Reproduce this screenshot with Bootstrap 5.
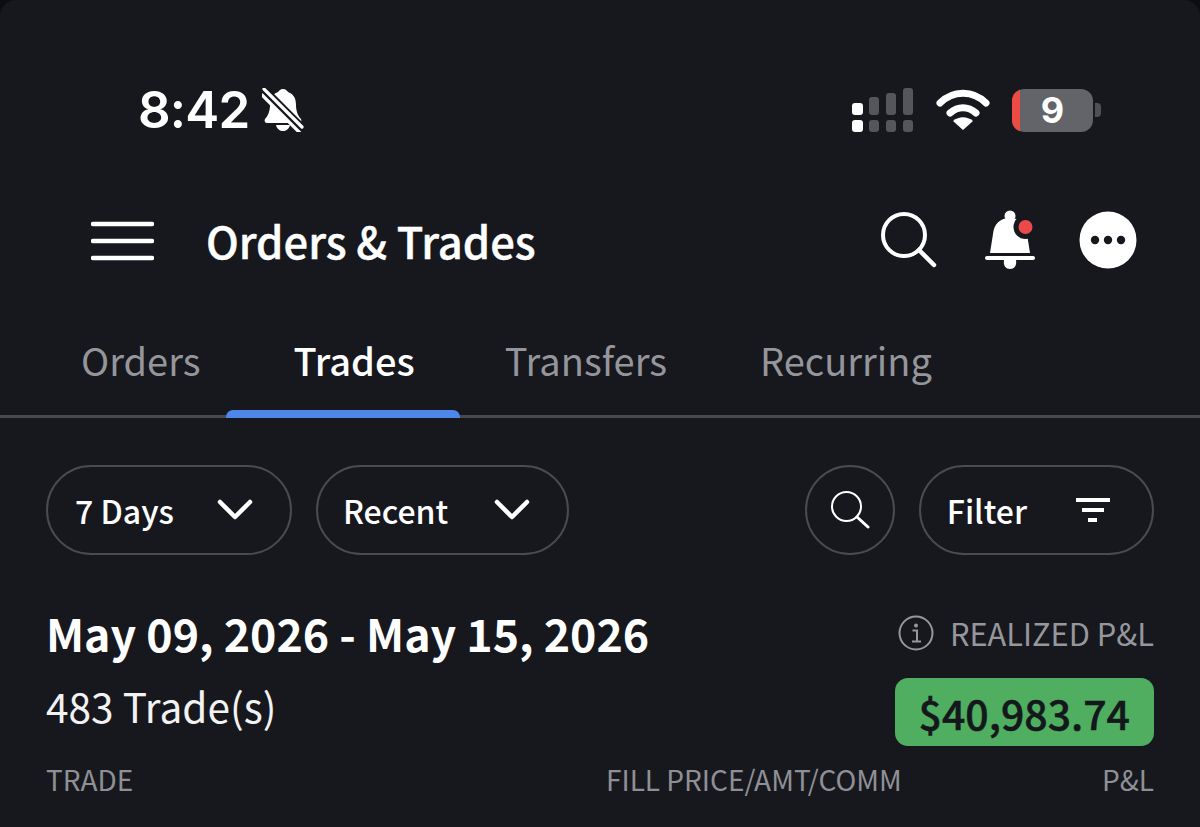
<!DOCTYPE html>
<html lang="en">
<head>
  <meta charset="UTF-8" />
  <meta name="viewport" content="width=device-width, initial-scale=1.0" />
  <title>Orders &amp; Trades</title>
  <link href="https://cdn.jsdelivr.net/npm/bootstrap@5.3.0/dist/css/bootstrap.min.css" rel="stylesheet">
  <style>
    html, body {
      height: 100%;
      background-color: #0c0d10;
    }
    body {
      font-family: "Noto Sans CJK SC", "Noto Sans", sans-serif;
      color: #fff;
      overflow: hidden;
    }
    .app-screen {
      height: 827px;
      background-color: #17181e;
      border-top-left-radius: 16px;
      border-top-right-radius: 16px;
      overflow: hidden;
    }
    .status-row {
      height: 179px;
      padding: 80px 99px 0 138px;
    }
    .status-inner {
      height: 60px;
    }
    .clock {
      font-family: Inter, "Liberation Sans", sans-serif;
      font-size: 51px;
      font-weight: 600;
      line-height: 60px;
      letter-spacing: -.8px;
    }
    .mute-bell {
      margin-left: 13px;
    }
    .wifi-icon {
      margin: 0 22px;
    }
    .batt {
      width: 81px;
      height: 43px;
      background-color: #63646a;
      border-radius: 12px;
      font-family: Inter, "Liberation Sans", sans-serif;
      font-size: 36px;
      font-weight: 700;
      line-height: 43px;
      text-align: center;
      overflow: hidden;
      position: relative;
    }
    .batt-low {
      position: absolute;
      left: 0;
      top: 0;
      width: 8px;
      height: 100%;
      background-color: #ec4a43;
    }
    .batt-cap {
      width: 6px;
      height: 14px;
      margin-left: 2px;
      background-color: #4f5056;
      border-radius: 0 4px 4px 0;
    }
    .head-row {
      height: 124px;
      padding: 0 63px 0 91px;
    }
    .head-title {
      font-size: 43.5px;
      font-weight: 500;
      margin-left: 52px;
      line-height: 1;
      -webkit-text-stroke: .4px #fff;
    }
    .head-icons {
      margin-top: -3px;
    }
    .bell-icon {
      margin-left: 45px;
    }
    .more-icon {
      margin-left: 42px;
    }
    .tab-row {
      height: 115px;
      padding-left: 81px;
      border-bottom: 3px solid #48494e;
    }
    .tab-item {
      height: 112px;
      font-size: 38px;
      line-height: 114px;
      color: #95969b;
      position: relative;
      margin-right: 93px;
    }
    .tab-item.is-on {
      color: #fff;
      font-weight: 500;
      margin-right: 90px;
    }
    .tab-item.is-on::after {
      content: "";
      position: absolute;
      left: -68px;
      right: -45px;
      bottom: -3px;
      height: 8px;
      background-color: #4f86ea;
      border-radius: 7px 7px 0 0;
    }
    .tool-row {
      padding: 47px 46px 0;
    }
    .pill-btn {
      height: 90px;
      border: 2px solid #4a4b50;
      border-radius: 45px;
      font-size: 32px;
      font-weight: 500;
      color: #fff;
      background: transparent;
      padding: 0 36px 0 27px;
    }
    .pill-gap {
      margin-left: 24px;
    }
    .pill-recent {
      padding-left: 25px;
    }
    .pill-round {
      width: 90px;
      padding: 0;
      justify-content: center;
    }
    .pill-filter {
      padding: 0 41px 0 26px;
    }
    .chev-icon {
      margin-left: 42px;
    }
    .pill-recent .chev-icon {
      margin-left: 45px;
    }
    .filter-icon {
      margin-left: 48px;
    }
    .sum-row {
      padding: 0 46px;
      margin-top: 48px;
    }
    .range-text {
      font-size: 44.7px;
      font-weight: 700;
      line-height: 60px;
    }
    .count-text {
      font-size: 40.6px;
      line-height: 50px;
      margin-top: 18px;
      color: #f2f2f3;
    }
    .realized {
      font-size: 30.8px;
      line-height: 44px;
      color: #96979c;
      margin-top: 8px;
    }
    .pnl-box {
      background-color: #4fae5f;
      color: #14181c;
      border-radius: 13px;
      font-size: 41px;
      font-weight: 500;
      line-height: 68px;
      padding: 0 24px;
      margin-top: 23px;
      -webkit-text-stroke: .5px #14181c;
    }
    .col-labels {
      padding: 0 46px;
      font-size: 28px;
      line-height: 40px;
      color: #8f9095;
      margin-top: 13px;
    }
    .col-first {
      width: 560px;
    }
  </style>
</head>
<body>
  <div class="app-screen">

    <div class="status-row">
      <div class="status-inner d-flex align-items-center justify-content-between">
        <div class="d-flex align-items-center">
          <span class="clock">8:42</span>
          <svg class="mute-bell" width="42" height="44" viewBox="0 0 42 44">
            <path d="M21 1c3 0 4 2 5 3 6 2 8 7 8 13 0 6 2 11 5 14 1 2 0 4-2 4H5c-2 0-3-2-2-4 3-3 5-8 5-14 0-6 2-11 8-13 1-1 2-3 5-3z" fill="#fff"/>
            <path d="M14 37h14c-1 4-4 6-7 6s-6-2-7-6z" fill="#fff"/>
            <path d="M2 3l38 38" stroke="#17181e" stroke-width="10"/>
            <path d="M2 1l38 38M0 7l38 38" stroke="#fff" stroke-width="3.2" stroke-linecap="round"/>
          </svg>
        </div>
        <div class="d-flex align-items-center">
          <svg width="62" height="45" viewBox="0 0 62 45">
            <rect x="0" y="15" width="11" height="12" rx="3" fill="#fff"/>
            <rect x="0" y="32" width="11" height="12" rx="3" fill="#fff"/>
            <rect x="17" y="9" width="10" height="18" rx="3" fill="#55565b"/>
            <rect x="17" y="32" width="10" height="12" rx="3" fill="#55565b"/>
            <rect x="34" y="5" width="10" height="22" rx="3" fill="#55565b"/>
            <rect x="34" y="32" width="10" height="12" rx="3" fill="#55565b"/>
            <rect x="51" y="0" width="10" height="27" rx="3" fill="#55565b"/>
            <rect x="51" y="32" width="10" height="12" rx="3" fill="#55565b"/>
          </svg>
          <svg class="wifi-icon" width="54" height="42" viewBox="0 0 54 42">
            <path d="M4 14C17 1 37 1 50 14" fill="none" stroke="#fff" stroke-width="7" stroke-linecap="round"/>
            <path d="M14 24c8-7 18-7 26 0" fill="none" stroke="#fff" stroke-width="7" stroke-linecap="round"/>
            <path d="M17 32c6-5 14-5 20 0l-10 9z" fill="#fff"/>
          </svg>
          <div class="batt"><span class="batt-low"></span>9</div>
          <span class="batt-cap"></span>
        </div>
      </div>
    </div>

    <div class="head-row d-flex align-items-center">
      <svg width="63" height="40" viewBox="0 0 63 40">
        <path d="M2 3h59M2 20h59M2 37h59" stroke="#fff" stroke-width="4.500" stroke-linecap="round"/>
      </svg>
      <span class="head-title">Orders &amp; Trades</span>
      <div class="head-icons ms-auto d-flex align-items-center">
        <svg width="58" height="58" viewBox="0 0 58 58">
          <circle cx="24" cy="24" r="21" fill="none" stroke="#fff" stroke-width="4"/>
          <path d="M39 39l15 15" stroke="#fff" stroke-width="4.500" stroke-linecap="round"/>
        </svg>
        <svg class="bell-icon" width="54" height="60" viewBox="0 0 54 60">
          <circle cx="27" cy="6" r="5.500" fill="#fff"/>
          <path d="M27 8c10 0 16 6 17 16l3 19H7l3-19C11 14 17 8 27 8z" fill="#fff"/>
          <path d="M4 48h46" stroke="#fff" stroke-width="4" stroke-linecap="round"/>
          <path d="M21 50h12c1 6-2 9-6 9s-7-3-6-9z" fill="#fff"/>
          <circle cx="42.500" cy="17" r="12" fill="#17181e"/>
          <circle cx="42.500" cy="17" r="7" fill="#ec4a4a"/>
        </svg>
        <svg class="more-icon" width="58" height="58" viewBox="0 0 58 58">
          <circle cx="29" cy="29" r="28.500" fill="#fff"/>
          <circle cx="16" cy="29" r="4.200" fill="#17181e"/>
          <circle cx="29" cy="29" r="4.200" fill="#17181e"/>
          <circle cx="42" cy="29" r="4.200" fill="#17181e"/>
        </svg>
      </div>
    </div>

    <div class="tab-row d-flex">
      <div class="tab-item">Orders</div>
      <div class="tab-item is-on">Trades</div>
      <div class="tab-item">Transfers</div>
      <div class="tab-item">Recurring</div>
    </div>

    <div class="tool-row d-flex align-items-center">
      <button class="pill-btn d-flex align-items-center" type="button">
        7 Days
        <svg class="chev-icon" width="38" height="22" viewBox="0 0 38 22">
          <path d="M4 3l15 15L34 3" fill="none" stroke="#fff" stroke-width="4.500" stroke-linecap="round" stroke-linejoin="round"/>
        </svg>
      </button>
      <button class="pill-btn pill-recent pill-gap d-flex align-items-center" type="button">
        Recent
        <svg class="chev-icon" width="38" height="22" viewBox="0 0 38 22">
          <path d="M4 3l15 15L34 3" fill="none" stroke="#fff" stroke-width="4.500" stroke-linecap="round" stroke-linejoin="round"/>
        </svg>
      </button>
      <button class="pill-btn pill-round d-flex align-items-center ms-auto" type="button" aria-label="Search">
        <svg width="40" height="40" viewBox="0 0 40 40">
          <circle cx="16.500" cy="16.500" r="14.500" fill="none" stroke="#fff" stroke-width="2"/>
          <path d="M27 27l11 10" stroke="#fff" stroke-width="3" stroke-linecap="round"/>
        </svg>
      </button>
      <button class="pill-btn pill-filter pill-gap d-flex align-items-center" type="button">
        Filter
        <svg class="filter-icon" width="36" height="24" viewBox="0 0 36 24">
          <path d="M1 2h34M7 12h22M13 22h9" stroke="#fff" stroke-width="4"/>
        </svg>
      </button>
    </div>

    <div class="sum-row d-flex justify-content-between">
      <div>
        <div class="range-text">May 09, 2026 - May 15, 2026</div>
        <div class="count-text">483 Trade(s)</div>
      </div>
      <div class="d-flex flex-column align-items-end">
        <div class="realized d-flex align-items-center">
          <svg class="me-3" width="36" height="36" viewBox="0 0 36 36">
            <circle cx="18" cy="18" r="16.500" fill="none" stroke="#96979c" stroke-width="2"/>
            <circle cx="18" cy="10.500" r="2" fill="#96979c"/>
            <path d="M14.500 15.500h4.500v11M14 26.500h9" fill="none" stroke="#96979c" stroke-width="2"/>
          </svg>
          REALIZED P&amp;L
        </div>
        <div class="pnl-box">$40,983.74</div>
      </div>
    </div>

    <div class="col-labels d-flex">
      <span class="col-first">TRADE</span>
      <span>FILL PRICE/AMT/COMM</span>
      <span class="ms-auto">P&amp;L</span>
    </div>
  </div>

  <script src="https://cdn.jsdelivr.net/npm/bootstrap@5.3.0/dist/js/bootstrap.bundle.min.js"></script>
</body>
</html>
